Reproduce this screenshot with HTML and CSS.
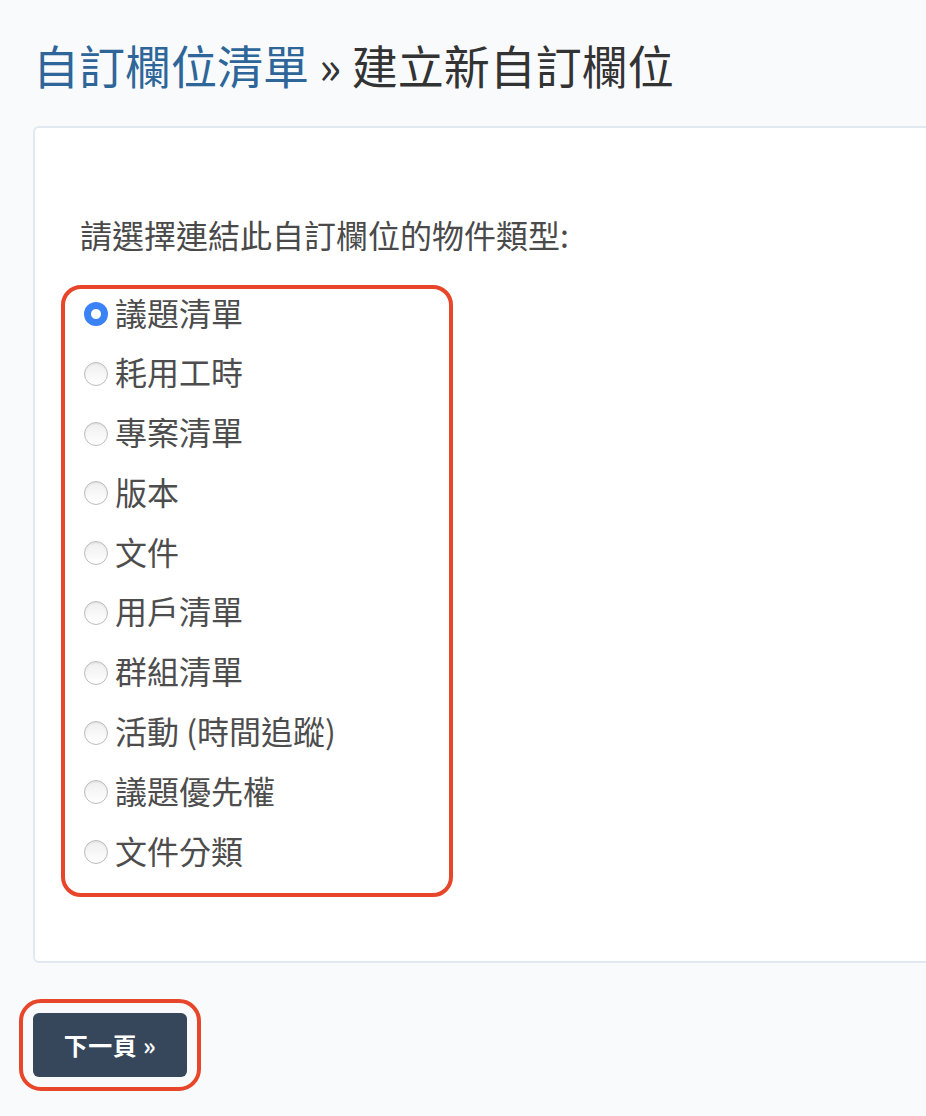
FILE: index.html
```html
<!DOCTYPE html>
<html lang="zh-Hant">
<head>
<meta charset="utf-8">
<title>建立新自訂欄位</title>
<link rel="stylesheet" href="styles.css">
</head>
<body>
<div class="page">
  <h1 class="title"><a class="crumb" href="#">自訂欄位清單</a> » 建立新自訂欄位</h1>
  <div class="card">
    <p class="prompt">請選擇連結此自訂欄位的物件類型:</p>
    <div class="highlight list-box">
      <label class="option"><span class="radio checked"></span><span class="text">議題清單</span></label>
      <label class="option"><span class="radio"></span><span class="text">耗用工時</span></label>
      <label class="option"><span class="radio"></span><span class="text">專案清單</span></label>
      <label class="option"><span class="radio"></span><span class="text">版本</span></label>
      <label class="option"><span class="radio"></span><span class="text">文件</span></label>
      <label class="option"><span class="radio"></span><span class="text">用戶清單</span></label>
      <label class="option"><span class="radio"></span><span class="text">群組清單</span></label>
      <label class="option"><span class="radio"></span><span class="text">活動 (時間追蹤)</span></label>
      <label class="option"><span class="radio"></span><span class="text">議題優先權</span></label>
      <label class="option"><span class="radio"></span><span class="text">文件分類</span></label>
    </div>
  </div>
  <div class="highlight button-box">
    <button class="next">下一頁 »</button>
  </div>
</div>
</body>
</html>
```

FILE: styles.css
```css
html, body {
  margin: 0;
  padding: 0;
  background: #f8fafc;
  overflow: hidden;
}
body {
  font-family: "Noto Sans CJK TC", "Noto Sans", sans-serif;
  color: #333;
}
.page {
  padding: 34px 0 0 33px;
}
.title {
  margin: 0 0 32px 0;
  font-size: 46px;
  line-height: 60px;
  font-weight: 400;
  color: #333;
  white-space: nowrap;
}
.crumb {
  color: #2f6699;
  text-decoration: none;
}
.card {
  width: 960px;
  height: 837px;
  box-sizing: border-box;
  border: 2px solid #e1e8ef;
  border-radius: 6px;
  background: #fff;
  padding: 81px 0 0 0;
}
.prompt {
  margin: 0 0 26px 45px;
  font-size: 32px;
  line-height: 50px;
  color: #4a4a4a;
}
.highlight {
  border: 4px solid #e8462a;
  box-sizing: border-box;
}
.list-box {
  width: 392px;
  margin-left: 26px;
  border-radius: 20px;
  padding: 0 19px 16px 19px;
  display: flex;
  flex-direction: column;
  gap: 9.8px;
}
.option {
  display: flex;
  align-items: center;
  height: 50px;
  font-size: 32px;
  color: #4d4d4d;
  white-space: nowrap;
}
.text {
  padding-bottom: 5px;
}
.radio {
  width: 24px;
  height: 24px;
  box-sizing: border-box;
  border-radius: 50%;
  border: 1px solid #bdbdbd;
  background: linear-gradient(#efefef, #ffffff);
  box-shadow: inset 0 1px 2px rgba(0,0,0,0.08);
  margin-right: 7px;
  flex: none;
}
.radio.checked {
  border: none;
  background: radial-gradient(circle, #ffffff 0 4.5px, #3a82f6 5.5px);
  box-shadow: none;
}
.button-box {
  display: inline-block;
  margin: 36px 0 0 -14px;
  border-radius: 22px;
  padding: 10px;
}
.next {
  display: block;
  width: 154px;
  height: 64px;
  border: none;
  border-radius: 6px;
  background: #36475b;
  color: #fff;
  font-family: "Noto Sans CJK TC", "Noto Sans", sans-serif;
  font-size: 24px;
  font-weight: 700;
  letter-spacing: 0.5px;
  padding: 0 0 2px 0;
}
```
